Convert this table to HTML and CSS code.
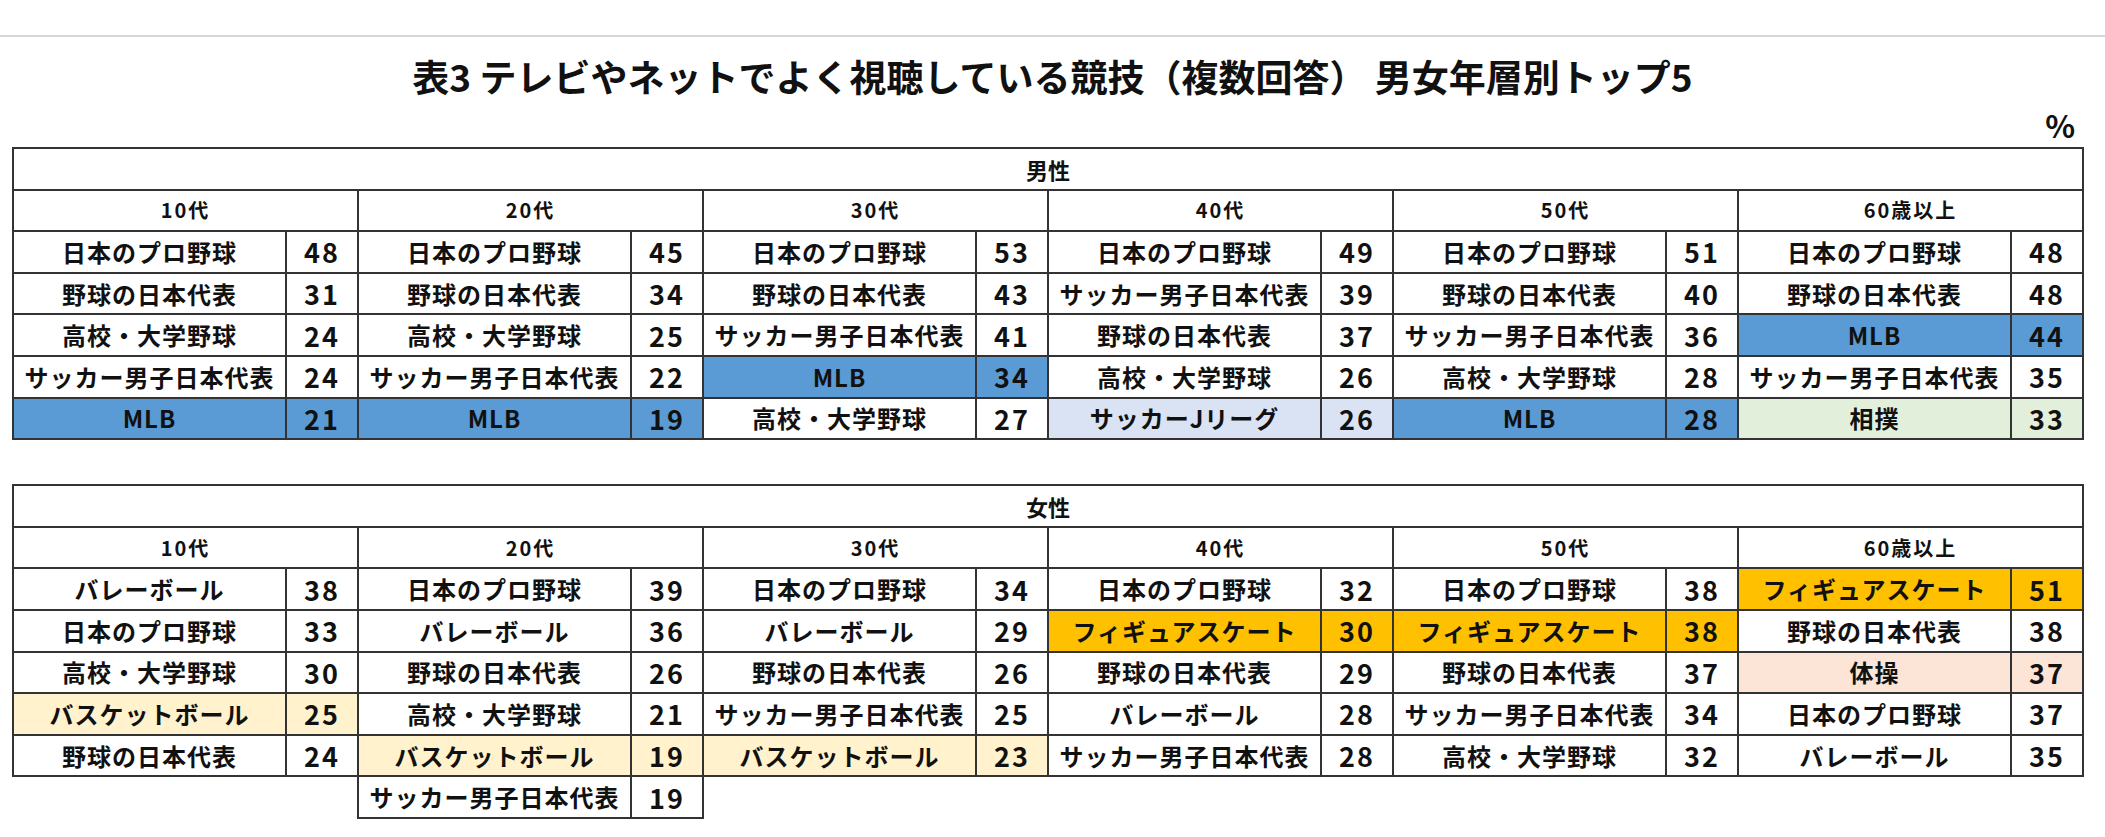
FILE: index.html
```html
<!DOCTYPE html>
<html lang="ja">
<head>
<meta charset="utf-8">
<title>表3</title>
<link rel="stylesheet" href="styles.css">
</head>
<body>
<div class="topline"></div>
<h1 class="title">表3 テレビやネットでよく視聴している競技（複数回答） 男女年層別トップ5</h1>
<div class="unit">%</div>

<table class="tbl">
  <colgroup>
    <col class="cn"><col class="cv"><col class="cn"><col class="cv"><col class="cn"><col class="cv">
    <col class="cn"><col class="cv"><col class="cn"><col class="cv"><col class="cn"><col class="cv">
  </colgroup>
  <tr><td class="sex" colspan="12">男性</td></tr>
  <tr class="ages">
    <td colspan="2">10代</td><td colspan="2">20代</td><td colspan="2">30代</td>
    <td colspan="2">40代</td><td colspan="2">50代</td><td colspan="2">60歳以上</td>
  </tr>
  <tr>
    <td class="n">日本のプロ野球</td><td class="v">48</td>
    <td class="n">日本のプロ野球</td><td class="v">45</td>
    <td class="n">日本のプロ野球</td><td class="v">53</td>
    <td class="n">日本のプロ野球</td><td class="v">49</td>
    <td class="n">日本のプロ野球</td><td class="v">51</td>
    <td class="n">日本のプロ野球</td><td class="v">48</td>
  </tr>
  <tr>
    <td class="n">野球の日本代表</td><td class="v">31</td>
    <td class="n">野球の日本代表</td><td class="v">34</td>
    <td class="n">野球の日本代表</td><td class="v">43</td>
    <td class="n">サッカー男子日本代表</td><td class="v">39</td>
    <td class="n">野球の日本代表</td><td class="v">40</td>
    <td class="n">野球の日本代表</td><td class="v">48</td>
  </tr>
  <tr>
    <td class="n">高校・大学野球</td><td class="v">24</td>
    <td class="n">高校・大学野球</td><td class="v">25</td>
    <td class="n">サッカー男子日本代表</td><td class="v">41</td>
    <td class="n">野球の日本代表</td><td class="v">37</td>
    <td class="n">サッカー男子日本代表</td><td class="v">36</td>
    <td class="n mlb">MLB</td><td class="v mlb">44</td>
  </tr>
  <tr>
    <td class="n">サッカー男子日本代表</td><td class="v">24</td>
    <td class="n">サッカー男子日本代表</td><td class="v">22</td>
    <td class="n mlb">MLB</td><td class="v mlb">34</td>
    <td class="n">高校・大学野球</td><td class="v">26</td>
    <td class="n">高校・大学野球</td><td class="v">28</td>
    <td class="n">サッカー男子日本代表</td><td class="v">35</td>
  </tr>
  <tr>
    <td class="n mlb">MLB</td><td class="v mlb">21</td>
    <td class="n mlb">MLB</td><td class="v mlb">19</td>
    <td class="n">高校・大学野球</td><td class="v">27</td>
    <td class="n jl">サッカーJリーグ</td><td class="v jl">26</td>
    <td class="n mlb">MLB</td><td class="v mlb">28</td>
    <td class="n sumo">相撲</td><td class="v sumo">33</td>
  </tr>
</table>

<table class="tbl tbl-f">
  <colgroup>
    <col class="cn"><col class="cv"><col class="cn"><col class="cv"><col class="cn"><col class="cv">
    <col class="cn"><col class="cv"><col class="cn"><col class="cv"><col class="cn"><col class="cv">
  </colgroup>
  <tr><td class="sex" colspan="12">女性</td></tr>
  <tr class="ages">
    <td colspan="2">10代</td><td colspan="2">20代</td><td colspan="2">30代</td>
    <td colspan="2">40代</td><td colspan="2">50代</td><td colspan="2">60歳以上</td>
  </tr>
  <tr>
    <td class="n">バレーボール</td><td class="v">38</td>
    <td class="n">日本のプロ野球</td><td class="v">39</td>
    <td class="n">日本のプロ野球</td><td class="v">34</td>
    <td class="n">日本のプロ野球</td><td class="v">32</td>
    <td class="n">日本のプロ野球</td><td class="v">38</td>
    <td class="n fig">フィギュアスケート</td><td class="v fig">51</td>
  </tr>
  <tr>
    <td class="n">日本のプロ野球</td><td class="v">33</td>
    <td class="n">バレーボール</td><td class="v">36</td>
    <td class="n">バレーボール</td><td class="v">29</td>
    <td class="n fig">フィギュアスケート</td><td class="v fig">30</td>
    <td class="n fig">フィギュアスケート</td><td class="v fig">38</td>
    <td class="n">野球の日本代表</td><td class="v">38</td>
  </tr>
  <tr>
    <td class="n">高校・大学野球</td><td class="v">30</td>
    <td class="n">野球の日本代表</td><td class="v">26</td>
    <td class="n">野球の日本代表</td><td class="v">26</td>
    <td class="n">野球の日本代表</td><td class="v">29</td>
    <td class="n">野球の日本代表</td><td class="v">37</td>
    <td class="n tai">体操</td><td class="v tai">37</td>
  </tr>
  <tr>
    <td class="n bask">バスケットボール</td><td class="v bask">25</td>
    <td class="n">高校・大学野球</td><td class="v">21</td>
    <td class="n">サッカー男子日本代表</td><td class="v">25</td>
    <td class="n">バレーボール</td><td class="v">28</td>
    <td class="n">サッカー男子日本代表</td><td class="v">34</td>
    <td class="n">日本のプロ野球</td><td class="v">37</td>
  </tr>
  <tr>
    <td class="n">野球の日本代表</td><td class="v">24</td>
    <td class="n bask">バスケットボール</td><td class="v bask">19</td>
    <td class="n bask">バスケットボール</td><td class="v bask">23</td>
    <td class="n">サッカー男子日本代表</td><td class="v">28</td>
    <td class="n">高校・大学野球</td><td class="v">32</td>
    <td class="n">バレーボール</td><td class="v">35</td>
  </tr>
  <tr>
    <td class="blank"></td><td class="blank"></td>
    <td class="n">サッカー男子日本代表</td><td class="v">19</td>
    <td class="blank"></td><td class="blank"></td>
    <td class="blank"></td><td class="blank"></td>
    <td class="blank"></td><td class="blank"></td>
    <td class="blank"></td><td class="blank"></td>
  </tr>
</table>
</body>
</html>
```

FILE: styles.css
```css
html, body {
  margin: 0;
  padding: 0;
  background: #ffffff;
}
body {
  font-family: "Noto Sans CJK JP", "Noto Sans", sans-serif;
  color: #111111;
  width: 2105px;
}
.topline {
  margin-top: 35px;
  height: 2px;
  background: #d6d6d6;
}
.title {
  margin: 14px 0 0 0;
  height: 50px;
  line-height: 50px;
  text-align: center;
  font-size: 37px;
  font-weight: 700;
  letter-spacing: 0px;
}
.unit {
  height: 46px;
  line-height: 48px;
  text-align: right;
  padding-right: 30px;
  font-size: 31px;
  font-weight: 700;
}
.tbl {
  margin-left: 12px;
  width: 2070px;
  table-layout: fixed;
  border-collapse: collapse;
}
.tbl-f {
  margin-top: 44px;
}
.cn { width: 273px; }
.cv { width: 72px; }
.tbl tr {
  height: 41.6px;
}
.tbl td {
  border: 2px solid #333333;
  padding: 0;
  text-align: center;
  vertical-align: middle;
  white-space: nowrap;
  overflow: hidden;
}
.tbl td.blank {
  border: none;
}
.sex {
  font-size: 22px;
  font-weight: 700;
  line-height: 1;
}
.ages td {
  font-size: 20px;
  font-weight: 700;
  letter-spacing: 2px;
  line-height: 1;
}
.n {
  font-size: 24px;
  font-weight: 700;
  letter-spacing: 1px;
  line-height: 1;
}
.v {
  font-size: 27px;
  font-weight: 700;
  letter-spacing: 2px;
  line-height: 1;
}
.mlb { background: #5b9bd5; }
.jl { background: #dae3f3; }
.sumo { background: #e2efda; }
.fig { background: #ffc000; }
.bask { background: #fff2cc; }
.tai { background: #fce4d6; }
```
